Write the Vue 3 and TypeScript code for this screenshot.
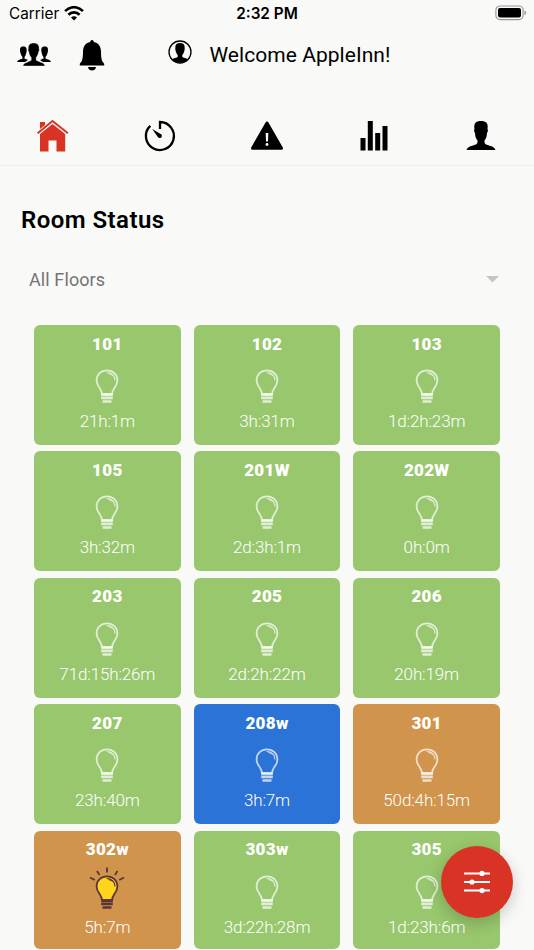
<script setup lang="ts">
type Status = 'free' | 'busy' | 'alert'

interface Room {
  name: string
  time: string
  status: Status
  lit?: boolean
}

const rooms: Room[] = [
  { name: '101', time: '21h:1m', status: 'free' },
  { name: '102', time: '3h:31m', status: 'free' },
  { name: '103', time: '1d:2h:23m', status: 'free' },
  { name: '105', time: '3h:32m', status: 'free' },
  { name: '201W', time: '2d:3h:1m', status: 'free' },
  { name: '202W', time: '0h:0m', status: 'free' },
  { name: '203', time: '71d:15h:26m', status: 'free' },
  { name: '205', time: '2d:2h:22m', status: 'free' },
  { name: '206', time: '20h:19m', status: 'free' },
  { name: '207', time: '23h:40m', status: 'free' },
  { name: '208w', time: '3h:7m', status: 'busy' },
  { name: '301', time: '50d:4h:15m', status: 'alert' },
  { name: '302w', time: '5h:7m', status: 'alert', lit: true },
  { name: '303w', time: '3d:22h:28m', status: 'free' },
  { name: '305', time: '1d:23h:6m', status: 'free' },
]
</script>

<template>
  <div class="screen">
    <div class="statusbar">
      <div class="carrier">
        <span>Carrier</span>
        <svg width="20" height="15" viewBox="0 0 20 15" fill="none" stroke="#000" stroke-width="2.700">
          <path d="M1.100 5.200C6-.1 14-.1 18.900 5.200" />
          <path d="M4.400 8.700C7.500 5.500 12.500 5.500 15.600 8.700" />
          <path d="M7 11.500C8.800 9.800 11.200 9.800 13 11.500L10 14.500Z" fill="#000" stroke="none" />
        </svg>
      </div>
      <span class="clock">2:32 PM</span>
      <svg class="battery" width="32" height="16" viewBox="0 0 32 16">
        <rect x="0.900" y="1" width="27.200" height="13.600" rx="4" fill="none" stroke="#999" stroke-width="1.200" />
        <rect x="3" y="3" width="23" height="9.600" rx="2" />
        <path d="M29.500 5.400Q31.300 6 31.300 7.800T29.500 10.200Z" fill="#999" />
      </svg>
    </div>

    <header class="header">
      <svg width="36" height="26" viewBox="0 0 36 26">
        <path d="M1 20C1.500 17.500 6 17 6.500 16.500V15C5 13.500 4.700 11.500 4.200 10C3.500 6 4.500 4.500 7.300 4.500S11.200 6 10.500 10C10 12 9.700 13.600 8.500 15V16.500L12 18L9 20Z" />
        <path d="M35 20C34.500 17.500 30 17 29.500 16.500V15C31 13.500 31.300 11.500 31.800 10C32.500 6 31.500 4.500 28.700 4.500S24.800 6 25.500 10C26 12 26.300 13.600 27.500 15V16.500L24 18L27 20Z" />
        <path d="M7 24C7.500 20.500 13 20 15.200 18.300V15.500C13.500 13.500 13 11.500 12.700 9.500C11.700 8.500 12 7.500 12.300 7C12 3 14 1 17.700 1S23.500 3 23.100 7C23.500 7.800 23.500 8.500 22.700 9.500C22.400 11.500 21.800 13.500 20.200 15.500V18.300C23 20 28.500 20.500 29 24Z" stroke="#f9f9f7" stroke-width=".4" />
      </svg>
      <svg class="bell" width="26" height="32" viewBox="0 0 26 32">
        <path d="M11.200 3C11.200.2 14.800.2 14.800 3C20 4 22 8 22 13C22 20 23 22.500 25.200 24.700V26.500H.8V24.700C3 22.500 4 20 4 13C4 8 6 4 11.200 3Z" />
        <path d="M9 28H17C16.500 32.700 9.500 32.700 9 28Z" />
      </svg>
      <div class="welcome">
        <svg width="24" height="24" viewBox="0 0 24 24">
          <circle cx="12" cy="12" r="11" fill="none" stroke="#000" stroke-width="1.300" />
          <path d="M4 19C7 18 9.700 17.800 9.700 16.500V15C8.300 13.500 7.700 11.500 7.500 10C7 8.500 7.400 8 7.400 7C7.400 4 9 3 12 3S16.600 4 16.600 7C16.600 8 17 8.500 16.500 10C16.300 11.500 15.700 13.500 14.300 15V16.500C14.300 17.800 17 18 20 19C16 24 8 24 4 19Z" />
        </svg>
        <span>Welcome AppleInn!</span>
      </div>
    </header>

    <nav class="tabs">
      <a class="tab">
        <svg width="34" height="34" viewBox="0 0 34 34" fill="#d83324">
          <path d="M1 13.500L16.500.8L32.500 13.500L31.300 15L16.500 3.200L2.300 15Z" />
          <path d="M4 3H9V6L4 10Z" />
          <path d="M4 15L16.500 5L29.200 15V32.500H20.500V21.500H12.500V32.500H4Z" />
        </svg>
      </a>
      <a class="tab">
        <svg width="34" height="34" viewBox="0 0 34 34">
          <path d="M17 10V3A14 14 0 1 1 7.300 6.800" fill="none" stroke="#000" stroke-width="2.300" />
          <path d="M9.200 10L18.500 15.400Q19.500 17.500 18.300 18.500Q16.500 19.700 15 18.300Z" />
        </svg>
      </a>
      <a class="tab">
        <svg width="34" height="34" viewBox="0 0 34 34">
          <path d="M17 4L31.500 29.200H2.500Z" stroke="#000" stroke-width="3" stroke-linejoin="round" />
          <path d="M15.700 14H18.300L18 22.500H16Z" fill="#f9f9f7" />
          <circle cx="17" cy="25.500" r="1.400" fill="#f9f9f7" />
        </svg>
      </a>
      <a class="tab">
        <svg width="34" height="34" viewBox="0 0 34 34">
          <path d="M3.500 19H8.500V31.500H3.500ZM10.800 2H15.800V31.500H10.800ZM18.200 14H23.200V31.500H18.200ZM25.500 7H30.500V31.500H25.500Z" />
        </svg>
      </a>
      <a class="tab">
        <svg width="34" height="34" viewBox="0 0 34 34">
          <path d="M2.500 31C3.500 26 13.500 27 13.500 23.500V21.500C11.500 19.500 11.200 16.500 11 14C9.700 12 10 11 10.500 10C9.500 4 12 2 17 2S24.500 4 23.500 10C24 11 24.300 12 23 14C22.800 16.500 22.500 19.500 20.500 21.500V23.500C20.500 27 30.500 26 31.500 31Z" />
        </svg>
      </a>
    </nav>

    <main class="content">
      <h1 class="title">Room Status</h1>
      <div class="select">
        <span>All Floors</span>
        <svg width="13" height="7" viewBox="0 0 13 7"><path d="M0 0H13L6.500 6.500Z" fill="#c5c5c3" /></svg>
      </div>
      <section class="grid">
        <article v-for="room in rooms" :key="room.name" class="card" :class="room.status">
          <h2 class="name">{{ room.name }}</h2>
          <svg class="bulb" :class="{ lit: room.lit }" width="36" height="44" viewBox="0 0 36 44">
            <g v-if="room.lit" class="rays">
              <path d="M18 .5V5.500M8 4L10.500 8M28.500 4L26 8M1 10.500L5.800 13M35 10.500L30.200 13" />
            </g>
            <path class="glass" d="M13 33.200C13 27.500 7.600 26 7.600 19.500C7.600 13.400 12 9.300 18 9.300S28.400 13.400 28.400 19.500C28.400 26 23 27.500 23 33.200Z" />
            <path class="shine" d="M17.500 11.500Q25.500 11.500 26 19.500M19.500 12.500Q25 14 25.800 17" />
            <path class="base" d="M12.200 33.700H23.800M12.200 36.900H23.800M13.500 40.500H22.500" />
          </svg>
          <p class="time">{{ room.time }}</p>
        </article>
      </section>
    </main>

    <button class="fab" aria-label="Filters">
      <svg width="28" height="24" viewBox="0 0 28 24" fill="#fff">
        <path d="M1 3.400H27M1 12H27M1 20.600H27" stroke="#fff" stroke-width="2" />
        <circle cx="19" cy="3.400" r="2.600" />
        <circle cx="9" cy="12" r="2.600" />
        <circle cx="19" cy="20.600" r="2.600" />
      </svg>
    </button>
  </div>
</template>

<style>
body {
  background: #f9f9f7;
}
</style>

<style scoped>
.screen {
  position: relative;
  width: 534px;
  height: 950px;
  overflow: hidden;
  box-sizing: border-box;
  background: #f9f9f7;
  color: #000;
  font-family: Roboto, sans-serif;
}
svg {
  display: block;
  flex: none;
}
.statusbar {
  display: grid;
  grid-template-columns: 1fr auto 1fr;
  align-items: center;
  height: 28px;
  padding: 0 7px 0 9px;
  font: 15.300px/28px Inter, sans-serif;
}
.carrier {
  display: flex;
  align-items: center;
  gap: 5px;
}
.carrier svg {
  margin-top: -2px;
}
.clock {
  font-weight: 600;
  margin-left: -2px;
}
.battery {
  justify-self: end;
  margin-top: -2px;
}
.header {
  display: flex;
  align-items: center;
  height: 54px;
  padding-left: 16px;
}
.bell {
  margin-left: 27px;
}
.welcome {
  display: flex;
  align-items: center;
  gap: 18px;
  margin-left: 62.500px;
  font-size: 21px;
  letter-spacing: 0.050px;
}
.welcome svg {
  margin-top: -7px;
}
.tabs {
  display: grid;
  grid-template-columns: repeat(5, 1fr);
  height: 83px;
  border-bottom: 1px solid #eeeeed;
}
.tab {
  display: flex;
  justify-content: center;
  padding-top: 37px;
}
.content {
  padding: 34px 34px 0;
}
.title {
  margin: 0 0 0 -13px;
  font-size: 24px;
  line-height: 40px;
  font-weight: 600;
  letter-spacing: 0.450px;
}
.select {
  display: flex;
  align-items: center;
  justify-content: space-between;
  height: 40px;
  margin: 19px 1px 26px -5px;
  color: #747474;
  font-size: 18px;
  letter-spacing: 0.100px;
}
.grid {
  display: grid;
  grid-template-columns: repeat(3, 1fr);
  grid-template-rows: repeat(4, 119.900px) 118px;
  gap: 6.600px 13px;
}
.card {
  display: flex;
  flex-direction: column;
  align-items: center;
  border-radius: 6px;
  color: #fff;
}
.free {
  background: #98c76d;
}
.busy {
  background: #2b73d6;
}
.alert {
  background: #d1944d;
}
.name {
  margin: 8.500px 0 0;
  font-size: 17px;
  line-height: 20px;
  font-weight: 900;
  letter-spacing: 0.300px;
}
.bulb {
  margin-top: 7.500px;
  fill: none;
  stroke: rgba(255, 255, 255, 0.700);
  stroke-width: 1.800;
}
.bulb .shine {
  stroke-width: 1.100;
}
.bulb .base {
  stroke-width: 2.700;
}
.bulb.lit {
  stroke: #59343a;
}
.bulb.lit .glass {
  fill: #ffd51b;
}
.bulb .rays {
  stroke-width: 1.800;
}
.time {
  margin: 6px 0 0;
  font-size: 17px;
  line-height: 20px;
  font-weight: 300;
  letter-spacing: -0.150px;
}
.fab {
  position: absolute;
  left: 440.500px;
  top: 845.500px;
  display: flex;
  align-items: center;
  justify-content: center;
  width: 72px;
  height: 72px;
  padding: 0;
  border: 0;
  border-radius: 50%;
  background: #d83324;
  box-shadow: 0 5px 16px rgba(0, 0, 0, 0.200);
}
</style>
